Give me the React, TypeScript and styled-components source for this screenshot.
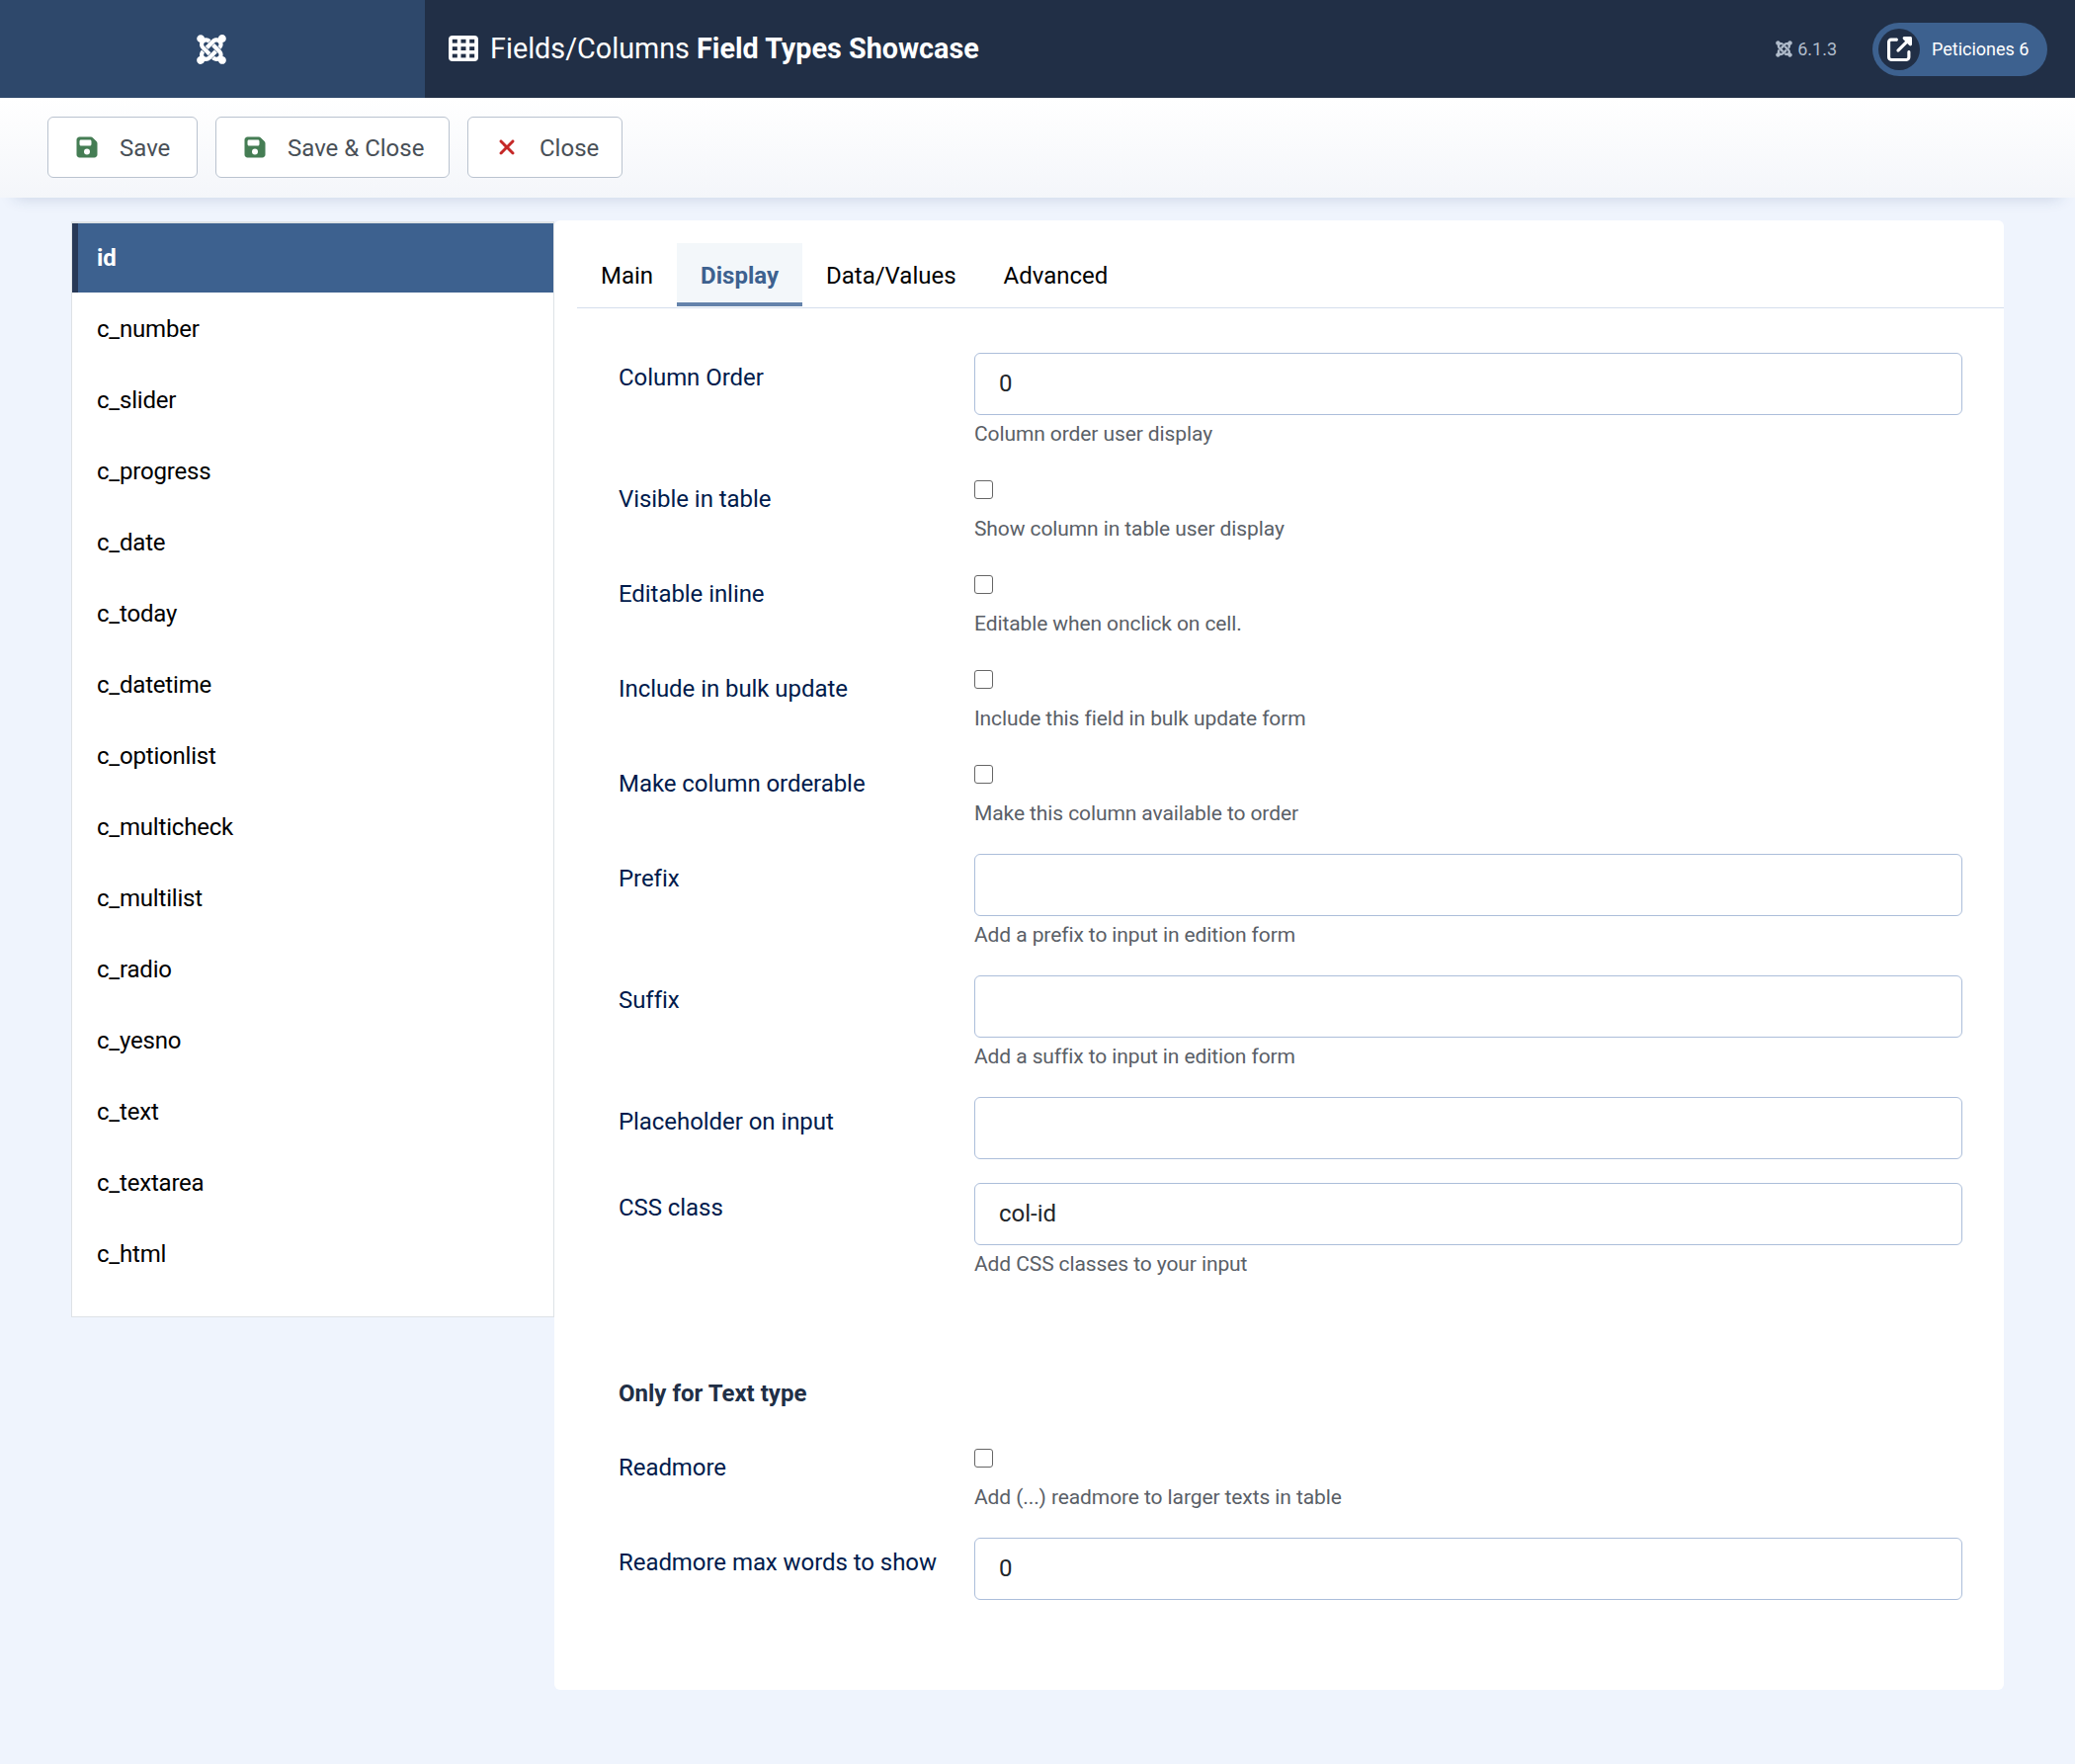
import { useState } from "react";
import styled, { createGlobalStyle } from "styled-components";
import { FaJoomla, FaFloppyDisk, FaXmark, FaUpRightFromSquare } from "react-icons/fa6";

const GlobalStyle = createGlobalStyle`
  * {
    box-sizing: border-box;
  }

  body {
    margin: 0;
    min-height: 1785px;
    background: #eff4fd;
    font-family: Roboto, "Liberation Sans", sans-serif;
    font-size: 24px;
    line-height: 36px;
    color: #22262a;
  }
`;

const Header = styled.header`
  display: flex;
  height: 99px;
  background: #212f46;
  color: #fff;
`;

const Logo = styled.div`
  display: flex;
  align-items: center;
  justify-content: center;
  width: 430px;
  padding-right: 2px;
  background: #2e486b;
  font-size: 34px;
`;

const PageTitle = styled.h1`
  display: flex;
  flex: 1;
  align-items: center;
  margin: 0;
  padding: 0 0 2px 24px;
  font-size: 28.75px;
  font-weight: 400;
  white-space: pre;

  svg {
    margin-right: 12px;
  }
`;

const HeaderItems = styled.div`
  display: flex;
  align-items: center;
  padding-right: 28px;
`;

const Version = styled.div`
  display: flex;
  align-items: center;
  gap: 4px;
  margin-right: 36px;
  font-size: 18px;
  color: #b0bccb;
`;

const SiteLink = styled.a`
  display: flex;
  align-items: center;
  width: 177px;
  height: 54px;
  padding-left: 6px;
  border-radius: 27px;
  background: #3d618f;
  font-size: 18px;
  white-space: nowrap;
`;

const SiteIcon = styled.span`
  display: flex;
  align-items: center;
  justify-content: center;
  width: 42px;
  height: 42px;
  margin-right: 12px;
  border-radius: 50%;
  background: #212f46;
  font-size: 25px;
`;

const Toolbar = styled.div`
  display: flex;
  gap: 18px;
  height: 101px;
  padding: 19px 48px;
  background: linear-gradient(#fff, #f4f6fa);
  box-shadow: 0 15px 15px -15px rgba(32, 66, 120, 0.2);
`;

const ToolbarButton = styled.button<{ $width: number }>`
  display: flex;
  align-items: center;
  width: ${({ $width }) => $width}px;
  height: 62px;
  padding: 1px 0 0 27px;
  border: 1.5px solid #bac3cf;
  border-radius: 6px;
  background: #fff;
  font: inherit;
  color: #495057;
  white-space: nowrap;
`;

const ButtonIcon = styled.span<{ $color: string }>`
  display: flex;
  width: 24px;
  margin: -1px 21px 0 0;
  color: ${({ $color }) => $color};
`;

const Content = styled.main`
  display: flex;
  align-items: flex-start;
  padding: 23px 72px 75px;
`;

const FieldList = styled.ul`
  width: 489px;
  height: 1109px;
  margin: 1px 0 0;
  padding: 0;
  border: 1px solid #dee2e6;
  border-top-width: 2px;
  background: #fff;
  letter-spacing: -0.2px;
  list-style: none;
`;

const FieldItem = styled.li<{ $active: boolean }>`
  height: ${({ $active }) => ($active ? 70 : 72)}px;
  padding: ${({ $active }) => ($active ? "17px 0 0 19px" : "19px 0 0 25px")};
  border-left: ${({ $active }) => ($active ? "6px solid #283957" : "0")};
  background: ${({ $active }) => ($active ? "#3d618f" : "transparent")};
  color: ${({ $active }) => ($active ? "#fff" : "#000")};
  font-weight: ${({ $active }) => ($active ? 700 : 400)};
  cursor: pointer;
`;

const Panel = styled.section`
  width: 1467px;
  height: 1487px;
  padding: 23px 0 0 23px;
  border-radius: 6px;
  background: #fff;
`;

const Tabs = styled.div`
  display: flex;
  height: 66px;
  border-bottom: 1.5px solid #d5dfed;
`;

const Tab = styled.button<{ $active: boolean }>`
  height: 64px;
  padding: 2px 24px 0;
  border: 0;
  background: ${({ $active }) => ($active ? "#f3f7fa" : "transparent")};
  box-shadow: ${({ $active }) => ($active ? "inset 0 -4px #6483ab" : "none")};
  font: inherit;
  font-weight: ${({ $active }) => ($active ? 700 : 400)};
  color: ${({ $active }) => ($active ? "#3d618f" : "#000")};
`;

const Fields = styled.div`
  padding: 45px 42px 0;
`;

const FieldRow = styled.div`
  display: grid;
  grid-template-columns: 360px 1fr;
  margin-bottom: 24px;
`;

const Label = styled.label`
  padding-top: 7px;
  letter-spacing: -0.06px;
  color: #001b4c;
`;

const TextInput = styled.input`
  display: block;
  width: 100%;
  height: 63px;
  padding: 0 24px 2px;
  border: 1.5px solid #acbeda;
  border-radius: 6px;
  background: #fff;
  font: inherit;
  color: #22262a;
`;

const Checkbox = styled.input`
  display: block;
  appearance: none;
  width: 19px;
  height: 19px;
  margin: 6px 0 14px;
  border: 1.5px solid #666;
  border-radius: 3px;
  background: #fff;
`;

const Help = styled.div`
  padding-top: 3px;
  height: 36px;
  font-size: 21px;
  line-height: 32px;
  letter-spacing: -0.1px;
  color: #5a6067;

  ${Checkbox} + & {
    height: 33px;
    padding-top: 0;
  }
`;

const SectionTitle = styled.h3`
  margin: 96px 0 32px;
  font-size: 24px;
  line-height: 36px;
  font-weight: 700;
  color: #212f46;
`;

const fieldNames = [
  "id",
  "c_number",
  "c_slider",
  "c_progress",
  "c_date",
  "c_today",
  "c_datetime",
  "c_optionlist",
  "c_multicheck",
  "c_multilist",
  "c_radio",
  "c_yesno",
  "c_text",
  "c_textarea",
  "c_html",
];

const tabs = ["Main", "Display", "Data/Values", "Advanced"];

type FieldDef = {
  label: string;
  type: "text" | "checkbox";
  value?: string;
  help?: string;
};

const displayFields: FieldDef[] = [
  { label: "Column Order", type: "text", value: "0", help: "Column order user display" },
  { label: "Visible in table", type: "checkbox", help: "Show column in table user display" },
  { label: "Editable inline", type: "checkbox", help: "Editable when onclick on cell." },
  { label: "Include in bulk update", type: "checkbox", help: "Include this field in bulk update form" },
  { label: "Make column orderable", type: "checkbox", help: "Make this column available to order" },
  { label: "Prefix", type: "text", help: "Add a prefix to input in edition form" },
  { label: "Suffix", type: "text", help: "Add a suffix to input in edition form" },
  { label: "Placeholder on input", type: "text" },
  { label: "CSS class", type: "text", value: "col-id", help: "Add CSS classes to your input" },
];

const textFields: FieldDef[] = [
  { label: "Readmore", type: "checkbox", help: "Add (...) readmore to larger texts in table" },
  { label: "Readmore max words to show", type: "text", value: "0" },
];

function TableIcon() {
  return (
    <svg width="30" height="26" viewBox="0 0 30 26">
      <rect width="30" height="26" rx="4" fill="#fff" />
      {[3.8, 11.2, 18.6].map((y) =>
        [3.8, 12.5, 21.2].map((x) => <rect key={`${x}-${y}`} x={x} y={y} width="5" height="3.8" fill="#212f46" />)
      )}
    </svg>
  );
}

function Field({ label, type, value, help }: FieldDef) {
  return (
    <FieldRow>
      <Label>{label}</Label>
      <div>
        {type === "text" ? <TextInput type="text" defaultValue={value} /> : <Checkbox type="checkbox" />}
        {help && <Help>{help}</Help>}
      </div>
    </FieldRow>
  );
}

export default function App() {
  const [activeField, setActiveField] = useState("id");
  const [activeTab, setActiveTab] = useState("Display");

  return (
    <>
      <GlobalStyle />
      <Header>
        <Logo>
          <FaJoomla />
        </Logo>
        <PageTitle>
          <TableIcon />
          Fields/Columns <b>Field Types Showcase</b>
        </PageTitle>
        <HeaderItems>
          <Version>
            <FaJoomla size={19} />
            6.1.3
          </Version>
          <SiteLink>
            <SiteIcon>
              <FaUpRightFromSquare />
            </SiteIcon>
            Peticiones 6
          </SiteLink>
        </HeaderItems>
      </Header>

      <Toolbar>
        <ToolbarButton $width={152}>
          <ButtonIcon $color="#457d54">
            <FaFloppyDisk />
          </ButtonIcon>
          Save
        </ToolbarButton>
        <ToolbarButton $width={237}>
          <ButtonIcon $color="#457d54">
            <FaFloppyDisk />
          </ButtonIcon>
          Save &amp; Close
        </ToolbarButton>
        <ToolbarButton $width={157}>
          <ButtonIcon $color="#c52827">
            <FaXmark />
          </ButtonIcon>
          Close
        </ToolbarButton>
      </Toolbar>

      <Content>
        <FieldList>
          {fieldNames.map((name) => (
            <FieldItem key={name} $active={name === activeField} onClick={() => setActiveField(name)}>
              {name}
            </FieldItem>
          ))}
        </FieldList>

        <Panel>
          <Tabs>
            {tabs.map((tab) => (
              <Tab key={tab} $active={tab === activeTab} onClick={() => setActiveTab(tab)}>
                {tab}
              </Tab>
            ))}
          </Tabs>
          <Fields>
            {displayFields.map((field) => (
              <Field key={field.label} {...field} />
            ))}
            <SectionTitle>Only for Text type</SectionTitle>
            {textFields.map((field) => (
              <Field key={field.label} {...field} />
            ))}
          </Fields>
        </Panel>
      </Content>
    </>
  );
}
